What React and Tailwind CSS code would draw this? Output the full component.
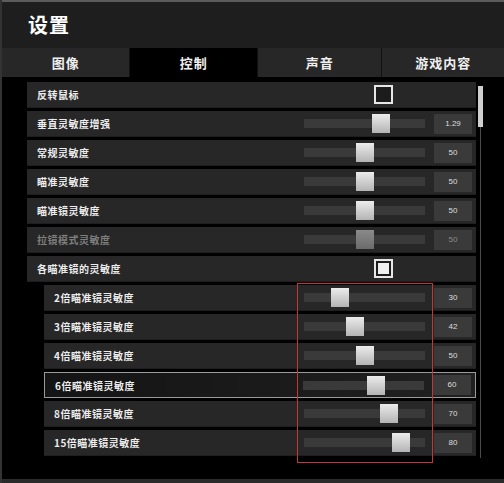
import React from 'react';

const FONT = { fontFamily: '"Noto Sans CJK SC", "Noto Sans", sans-serif' };

const tabs = [
  { label: '图像', w: 'w-[128px]' },
  { label: '控制', w: 'w-[128px]', active: true },
  { label: '声音', w: 'w-[125px]' },
  { label: '游戏内容', w: 'w-[123px]' },
];

const rows = [
  { label: '反转鼠标', type: 'check', checked: false },
  { label: '垂直灵敏度增强', type: 'slider', value: '1.29', pos: 0.64 },
  { label: '常规灵敏度', type: 'slider', value: '50', pos: 0.5 },
  { label: '瞄准灵敏度', type: 'slider', value: '50', pos: 0.5 },
  { label: '瞄准镜灵敏度', type: 'slider', value: '50', pos: 0.5 },
  { label: '拉镜模式灵敏度', type: 'slider', value: '50', pos: 0.5, disabled: true },
  { label: '各瞄准镜的灵敏度', type: 'check', checked: true },
  { label: '2倍瞄准镜灵敏度', type: 'slider', value: '30', pos: 0.3, sub: true },
  { label: '3倍瞄准镜灵敏度', type: 'slider', value: '42', pos: 0.42, sub: true },
  { label: '4倍瞄准镜灵敏度', type: 'slider', value: '50', pos: 0.5, sub: true },
  { label: '6倍瞄准镜灵敏度', type: 'slider', value: '60', pos: 0.6, sub: true, focus: true },
  { label: '8倍瞄准镜灵敏度', type: 'slider', value: '70', pos: 0.7, sub: true },
  { label: '15倍瞄准镜灵敏度', type: 'slider', value: '80', pos: 0.8, sub: true },
];

function Slider({ pos, value, disabled }) {
  return (
    <div className="flex items-center w-[172px] pr-[4px]">
      <div className="relative w-[121px] h-[9px] bg-[#3a3a3a]">
        <div
          className={`absolute top-[-5px] w-[18px] h-[19px] bg-gradient-to-b ${
            disabled ? 'from-[#8a8a8a] to-[#6c6c6c]' : 'from-[#ececec] to-[#b4b4b4]'
          }`}
          style={{ left: Math.round(pos * 121 - 9) }}
        />
      </div>
      <div
        className={`ml-[9px] w-[38px] h-[20px] bg-[#3a3a3a] flex items-center justify-center text-[8px] ${
          disabled ? 'text-[#8a8a8a]' : 'text-[#dddddd]'
        }`}
        style={{ fontFamily: '"Liberation Sans", sans-serif' }}
      >
        {value}
      </div>
    </div>
  );
}

function Checkbox({ checked }) {
  return (
    <div className="w-[172px] pl-[70px]">
      <div className="w-[19px] h-[19px] border-2 border-[#e6e6e6] bg-[#1c1c1c] flex items-center justify-center">
        {checked && <div className="w-[11px] h-[11px] bg-[#eeeeee]" />}
      </div>
    </div>
  );
}

function Row({ row }) {
  const base = row.focus
    ? 'border border-[#9a9a9a] bg-gradient-to-r from-[#141414] to-[#202020]'
    : 'bg-[#272727] border-b border-[#1e1e1e]';
  return (
    <div
      className={`h-[26px] flex items-center justify-between ${base} ${
        row.sub ? 'ml-[17px] pl-[10px]' : 'pl-[10px]'
      }`}
    >
      <span
        className={`text-[10px] font-bold tracking-[0.5px] ${
          row.disabled ? 'text-[#7e7e7e]' : 'text-[#ececec]'
        }`}
      >
        {row.label}
      </span>
      {row.type === 'check' ? (
        <Checkbox checked={row.checked} />
      ) : (
        <Slider pos={row.pos} value={row.value} disabled={row.disabled} />
      )}
    </div>
  );
}

export default function App() {
  return (
    <div
      className="relative w-[504px] h-[483px] bg-black overflow-hidden border-l-2 border-[#333333] flex flex-col"
      style={FONT}
    >
      <div className="h-[2px] bg-[#5c5c5c]" />
      <div className="h-[46px] bg-[#1e1e1e] flex items-center pl-[26px]">
        <h1 className="text-[20px] font-bold text-white tracking-[1px]">设置</h1>
      </div>
      <div className="h-[29px] flex bg-[#1a1a1a]">
        {tabs.map((t, i) => (
          <div
            key={t.label}
            className={`${t.w} flex items-center justify-center text-[13px] font-bold text-[#f0f0f0] tracking-[1px] ${
              t.active ? 'bg-black' : 'bg-[#272727]'
            } ${i > 0 ? 'border-l border-[#111111]' : ''}`}
          >
            {t.label}
          </div>
        ))}
      </div>

      <div className="flex-1 flex pt-[5px]">
        <div className="ml-[25px] w-[449px] flex flex-col gap-[3px]">
          {rows.map((r) => (
            <Row key={r.label} row={r} />
          ))}
        </div>
        {/* scrollbar */}
        <div className="ml-[2px] w-[5px] flex flex-col items-center pt-[4px]">
          <div className="w-[5px] h-[41px] bg-[#cfcfcf]" />
          <div className="w-px h-[331px] bg-[#4a4a4a]" />
        </div>
      </div>
      <div className="h-[4px] bg-[#2a2a2a]" />

      {/* red highlight box */}
      <div className="absolute left-[295px] top-[283px] w-[136px] h-[180px] border border-[#c8343c]" />
    </div>
  );
}
